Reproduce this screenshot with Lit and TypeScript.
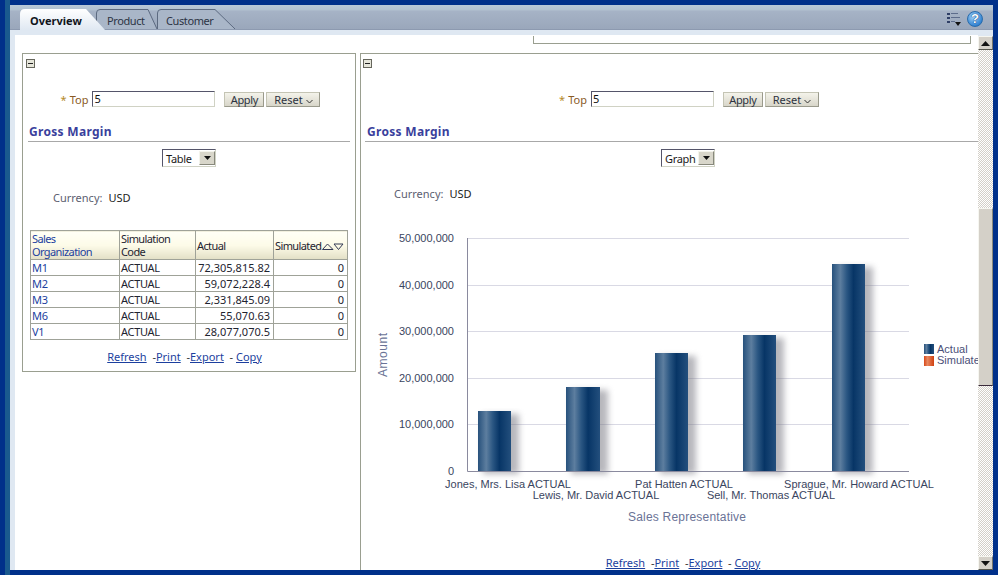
import { LitElement, html, css, svg } from "lit";
import { customElement } from "lit/decorators.js";

const rows = [
  ["M1", "ACTUAL", "72,305,815.82", "0"],
  ["M2", "ACTUAL", "59,072,228.4", "0"],
  ["M3", "ACTUAL", "2,331,845.09", "0"],
  ["M6", "ACTUAL", "55,070.63", "0"],
  ["V1", "ACTUAL", "28,077,070.5", "0"],
];
const yTicks: [string, number][] = [
  ["50,000,000", 238], ["40,000,000", 285], ["30,000,000", 331],
  ["20,000,000", 378], ["10,000,000", 424], ["0", 471],
];
const bars = [
  { x: 478, w: 33, top: 411, label: "Jones, Mrs. Lisa ACTUAL", cx: 508, ly: 488 },
  { x: 566, w: 34, top: 387, label: "Lewis, Mr. David ACTUAL", cx: 596, ly: 499 },
  { x: 655, w: 33, top: 353, label: "Pat Hatten ACTUAL", cx: 684, ly: 488 },
  { x: 743, w: 33, top: 335, label: "Sell, Mr. Thomas ACTUAL", cx: 771, ly: 499 },
  { x: 832, w: 33, top: 264, label: "Sprague, Mr. Howard ACTUAL", cx: 859, ly: 488 },
];

@customElement("app-root")
export class AppRoot extends LitElement {
  static styles = css`
    :host { display: block; width: 998px; height: 575px; overflow: hidden; background: #00308a; font-family: "Noto Sans", "Liberation Sans", sans-serif; font-size: 11px; color: #222; }
    .frame { display: flex; height: 565px; padding: 5px 5px 5px 0; }
    .edge { width: 5px; margin-left: 5px; background: #1a5a8e; margin-top: -5px; margin-bottom: -5px; }
    .main { flex: 1; display: flex; flex-direction: column; min-width: 0; }
    .tabbar { height: 25px; display: flex; align-items: flex-end; padding-left: 10px; background: linear-gradient(#b9c9d8 0, #b2c1d0 5px, #a6b3c6 6px, #9aa7bb 100%); box-sizing: border-box; border-bottom: 1px solid #8d9ab0; position: relative; }
    .tab { position: relative; height: 20px; font-size: 11px; color: #2c3444; flex: none; letter-spacing: -0.4px; }
    .tab svg { position: absolute; left: 0; top: 0; }
    .tab span { position: relative; display: block; line-height: 23px; }
    .t1 { width: 85px; z-index: 3; margin-bottom: -1px; height: 21px; letter-spacing: 0; }
    .t1 span { padding-left: 10px; font-weight: 700; color: #10141c; }
    .t2 { width: 61px; margin-left: -9px; z-index: 1; }
    .t2 span { padding-left: 11px; }
    .t3 { width: 78px; z-index: 2; }
    .t3 span { padding-left: 9px; }
    .tools { margin-left: auto; display: flex; align-items: center; gap: 5px; padding: 3px 10px 0 0; align-self: center; }
    .menu { margin-right: 1px; }
    .help { width: 16px; height: 16px; border-radius: 50%; background: radial-gradient(circle at 40% 35%, #a6d4f6, #2d7fd0 75%, #1a5aa0); border: 1px solid #2b6cab; box-sizing: border-box; display: flex; align-items: center; justify-content: center; color: #fff; font: 700 13px "Liberation Sans", sans-serif; text-shadow: 0 0 1px #0a3a80, 0 0 1px #0a3a80; }
    .body { flex: 1; display: flex; min-height: 0; padding: 5px 0 0 5px; background: #dfe8f2; }
    .scroll { flex: 1; min-width: 0; background: #fff; overflow: hidden; }
    .frag { height: 8px; width: 438px; margin-left: 518px; box-sizing: border-box; border: 1px solid #9a9f90; border-top: 0; margin-top: 1px; background: #fff; }
    .panels { display: flex; gap: 4px; margin: 9px 0 0 7px; align-items: flex-start; }
    .panel { border: 1px solid #9a9f90; flex: none; box-sizing: border-box; background: #fff; }
    .left { width: 334px; height: 319px; }
    .right { width: 660px; height: 560px; border-right: 0; border-bottom: 0; }
    .minus { display: block; width: 9px; height: 9px; margin: 5px 0 0 3px; }
    .right .minus { margin-left: 2px; }
    .form { display: flex; justify-content: center; align-items: flex-start; margin-top: 23px; height: 17px; }
    .left .form { padding-left: 3px; }
    .right .form { padding-right: 3px; }
    .req { color: #b58a2a; line-height: 17px; margin-right: 3px; font-size: 11px; }
    .lbl { color: #8a5a24; line-height: 18px; margin-right: 4px; }
    .input { width: 123px; height: 16px; box-sizing: border-box; border: 1px solid #d0d2c4; border-top: 1px solid #55556a; border-left: 1px solid #55556a; background: #fff; line-height: 14px; padding-left: 1px; color: #111; margin-right: 9px; }
    .btn { height: 15px; margin-top: 1px; box-sizing: border-box; background: linear-gradient(#f4f3ea, #d8d6ca); border: 1px solid #c4c4b4; border-right-color: #9a9a8c; border-bottom-color: #9a9a8c; text-align: center; line-height: 13px; color: #2c3240; }
    .apply { width: 40px; margin-right: 2px; letter-spacing: -0.3px; }
    .reset { width: 54px; }
    .reset svg { margin-left: 3px; }
    .title { margin: 14px 5px 0; height: 19px; line-height: 20px; border-bottom: 1px solid #a8a8a8; padding-left: 1px; font-weight: 700; font-size: 12px; letter-spacing: .3px; color: #3a3f9c; box-sizing: content-box; }
    .right .title { margin-left: 4px; padding-left: 2px; }
    .selwrap { display: flex; justify-content: center; margin-top: 7px; }
    .right .selwrap { padding-right: 5px; }
    .select { width: 54px; height: 18px; box-sizing: border-box; display: flex; align-items: center; justify-content: space-between; border: 1px solid #d0d2c4; border-top: 1px solid #55556a; border-left: 1px solid #55556a; padding: 1px 0 1px 3px; color: #1a1a1a; letter-spacing: -0.3px; }
    .arrow { width: 16px; height: 14px; background: #d8d6ca; border: 1px solid; border-color: #f4f4ec #88887c #88887c #f4f4ec; box-sizing: border-box; display: flex; align-items: center; justify-content: center; }
    .cur { display: flex; gap: 6px; padding-left: 30px; height: 16px; line-height: 16px; margin-top: 23px; }
    .right .cur { padding-left: 33px; margin-top: 19px; }
    .cur .k { color: #5c6070; }
    table { border-collapse: collapse; width: 317px; margin: 24px 0 0 7px; table-layout: fixed; }
    th, td { border: 1px solid #9fa298; padding: 0 1px; font-weight: 400; text-align: left; box-sizing: border-box; height: 16px; line-height: 13px; color: #1e2430; white-space: nowrap; }
    th { height: 29px; letter-spacing: -0.6px; background: linear-gradient(#fffff6 0, #fdfbe8 50%, #e2dfc6 100%); }
    td { letter-spacing: -0.3px; }
    td.num { text-align: right; padding-right: 3px; letter-spacing: 0; }
    td.lnk, th.lnk { color: #1c3f9e; }
    .sort { display: inline-flex; vertical-align: -1px; letter-spacing: 0; }
    .links { display: flex; justify-content: center; padding-right: 9px; height: 14px; line-height: 14px; margin-top: 10px; color: #333; white-space: pre; }
    .links a { color: #1c3f9e; text-decoration: underline; }
    .chart { display: block; margin-top: 3px; }
    .right .links { margin-top: 1px; padding-right: 15px; }
    .sb { width: 15px; flex: none; margin-top: 1px; display: flex; flex-direction: column; background: repeating-conic-gradient(#d4d0c8 0 25%, #fff 0 50%) 0 0 / 2px 2px; }
    .sbb { height: 14px; flex: none; box-sizing: border-box; background: #d4d0c8; border: 1px solid; border-color: #f6f6f0 #77776c #55554c #f6f6f0; display: flex; align-items: center; justify-content: center; }
    .thumb { height: 178px; margin-top: 158px; box-sizing: border-box; background: #d4d0c8; border: 1px solid; border-color: #f6f6f0 #88887c #3a2a3a #f6f6f0; }
    .sp { flex: 1; }
  `;

  private panel(cls: string, sel: string, content: unknown) {
    return html`<section class="panel ${cls}">
      <svg class="minus" viewBox="0 0 9 9"><rect x=".5" y=".5" width="8" height="8" fill="#e6e6da" stroke="#66665c"/><rect x="2" y="4" width="5" height="1" fill="#222"/></svg>
      <div class="form">
        <span class="req">*</span><span class="lbl">Top</span>
        <div class="input">5</div>
        <div class="btn apply">Apply</div>
        <div class="btn reset">Reset<svg width="7" height="5" viewBox="0 0 7 5"><path d="M.5 1 3.5 4 6.5 1" fill="none" stroke="#333"/></svg></div>
      </div>
      <div class="title">Gross Margin</div>
      <div class="selwrap"><div class="select"><span>${sel}</span><span class="arrow"><svg width="7" height="4" viewBox="0 0 7 4"><path d="M0 0H7L3.5 4Z" fill="#111"/></svg></span></div></div>
      <div class="cur"><span class="k">Currency:</span><span>USD</span></div>
      ${content}
      <div class="links"><a>Refresh</a>  -<a>Print</a>  -<a>Export</a>  - <a>Copy</a></div>
    </section>`;
  }

  private table() {
    return html`<table>
      <colgroup><col style="width:89px"/><col style="width:76px"/><col style="width:78px"/><col style="width:74px"/></colgroup>
      <tr><th class="lnk">Sales<br/>Organization</th><th>Simulation<br/>Code</th><th>Actual</th>
      <th>Simulated<span class="sort"><svg width="22" height="8" viewBox="0 0 22 8"><path d="M.5 6.5 5.5 1 11 6.5Z M12 1H21L16.5 6.5Z" fill="none" stroke="#333a55"/></svg></span></th></tr>
      ${rows.map((r) => html`<tr><td class="lnk">${r[0]}</td><td>${r[1]}</td><td class="num">${r[2]}</td><td class="num">${r[3]}</td></tr>`)}
    </table>`;
  }

  private chart() {
    return html`<svg class="chart" width="657" height="350" viewBox="361 205 657 350" font-family="Liberation Sans, Arial, sans-serif" font-size="11">
      <defs>
        <linearGradient id="bar" x1="0" x2="1" y1="0" y2="0">
          <stop offset="0" stop-color="#27517c"/><stop offset=".25" stop-color="#5d7e9f"/><stop offset=".45" stop-color="#2a5682"/><stop offset=".65" stop-color="#073566"/><stop offset="1" stop-color="#234f7d"/>
        </linearGradient>
        <linearGradient id="sim" x1="0" x2="1" y1="0" y2="0"><stop offset="0" stop-color="#d84818"/><stop offset=".35" stop-color="#e88860"/><stop offset="1" stop-color="#d04010"/></linearGradient>
        <filter id="sh" x="-30%" y="-10%" width="160%" height="120%"><feGaussianBlur stdDeviation="3"/></filter>
      </defs>
      ${yTicks.slice(0, 5).map((t) => svg`<line x1="467" x2="909" y1=${t[1] + 0.5} y2=${t[1] + 0.5} stroke="#d9d9e4"/>`)}
      ${bars.map((b) => svg`<rect x=${b.x + 5} y=${b.top + 3} width=${b.w + 3} height=${471 - b.top} fill="#70707a" opacity=".5" filter="url(#sh)"/>`)}
      ${bars.map((b) => svg`<rect x=${b.x} y=${b.top} width=${b.w} height=${471 - b.top} fill="url(#bar)"/>`)}
      <path d="M467.5 238V471.5H909" fill="none" stroke="#8a8a9e"/>
      ${yTicks.map((t) => svg`<text x="454" y=${t[1] + 4} text-anchor="end" fill="#3a4560">${t[0]}</text>`)}
      ${bars.map((b) => svg`<text x=${b.cx} y=${b.ly} text-anchor="middle" fill="#3a4560">${b.label}</text>`)}
      <text x="0" y="0" font-size="12" transform="translate(387 355) rotate(-90)" text-anchor="middle" fill="#6a7396" textLength="44">Amount</text>
      <text x="687" y="521" font-size="12" text-anchor="middle" fill="#6a7396" textLength="118">Sales Representative</text>
      <rect x="924" y="344" width="10" height="10" fill="url(#bar)"/>
      <rect x="924" y="356" width="10" height="10" fill="url(#sim)"/>
      <text x="937" y="353" fill="#4a4f78">Actual</text>
      <text x="937" y="364" fill="#4a4f78">Simulated</text>
    </svg>`;
  }

  render() {
    return html`<div class="frame">
      <div class="edge"></div>
      <div class="main">
        <div class="tabbar">
          <div class="tab t1"><svg width="85" height="21" viewBox="0 0 85 21"><defs><linearGradient id="ov" x1="0" x2="0" y1="0" y2="1"><stop offset="0" stop-color="#fff"/><stop offset="1" stop-color="#dfe8f2"/></linearGradient></defs><path d="M0 21V5Q0 0 5 0H66L85 21Z" fill="url(#ov)"/></svg><span>Overview</span></div>
          <div class="tab t2"><svg width="61" height="20" viewBox="0 0 61 20"><path d="M.5 20V4Q.5 .5 4 .5H52L61 20" fill="#a9b6c8" stroke="#5c6a80"/></svg><span>Product</span></div>
          <div class="tab t3"><svg width="78" height="20" viewBox="0 0 78 20"><path d="M.5 20V4Q.5 .5 4 .5H58L78 20" fill="#a9b6c8" stroke="#5c6a80"/></svg><span>Customer</span></div>
          <div class="tools">
            <svg class="menu" width="14" height="14" viewBox="0 0 14 14"><g fill="#2f3f66"><rect x="0" y="1" width="3" height="2"/><rect x="4" y="1" width="7" height="1" opacity=".6"/><rect x="0" y="5" width="3" height="2"/><rect x="4" y="5" width="9" height="1" opacity=".6"/><rect x="0" y="9" width="3" height="2"/><rect x="4" y="9" width="4" height="1" opacity=".6"/></g><path d="M8 10H14L11 14Z" fill="#111"/></svg>
            <div class="help">?</div>
          </div>
        </div>
        <div class="body">
          <div class="scroll">
            <div class="frag"></div>
            <div class="panels">
              ${this.panel("left", "Table", this.table())}
              ${this.panel("right", "Graph", this.chart())}
            </div>
          </div>
          <div class="sb">
            <div class="sbb"><svg width="9" height="5" viewBox="0 0 9 5"><path d="M0 5H9L4.5 0Z" fill="#111"/></svg></div>
            <div class="thumb"></div>
            <div class="sp"></div>
            <div class="sbb"><svg width="9" height="5" viewBox="0 0 9 5"><path d="M0 0H9L4.5 5Z" fill="#111"/></svg></div>
          </div>
        </div>
      </div>
    </div>`;
  }
}
